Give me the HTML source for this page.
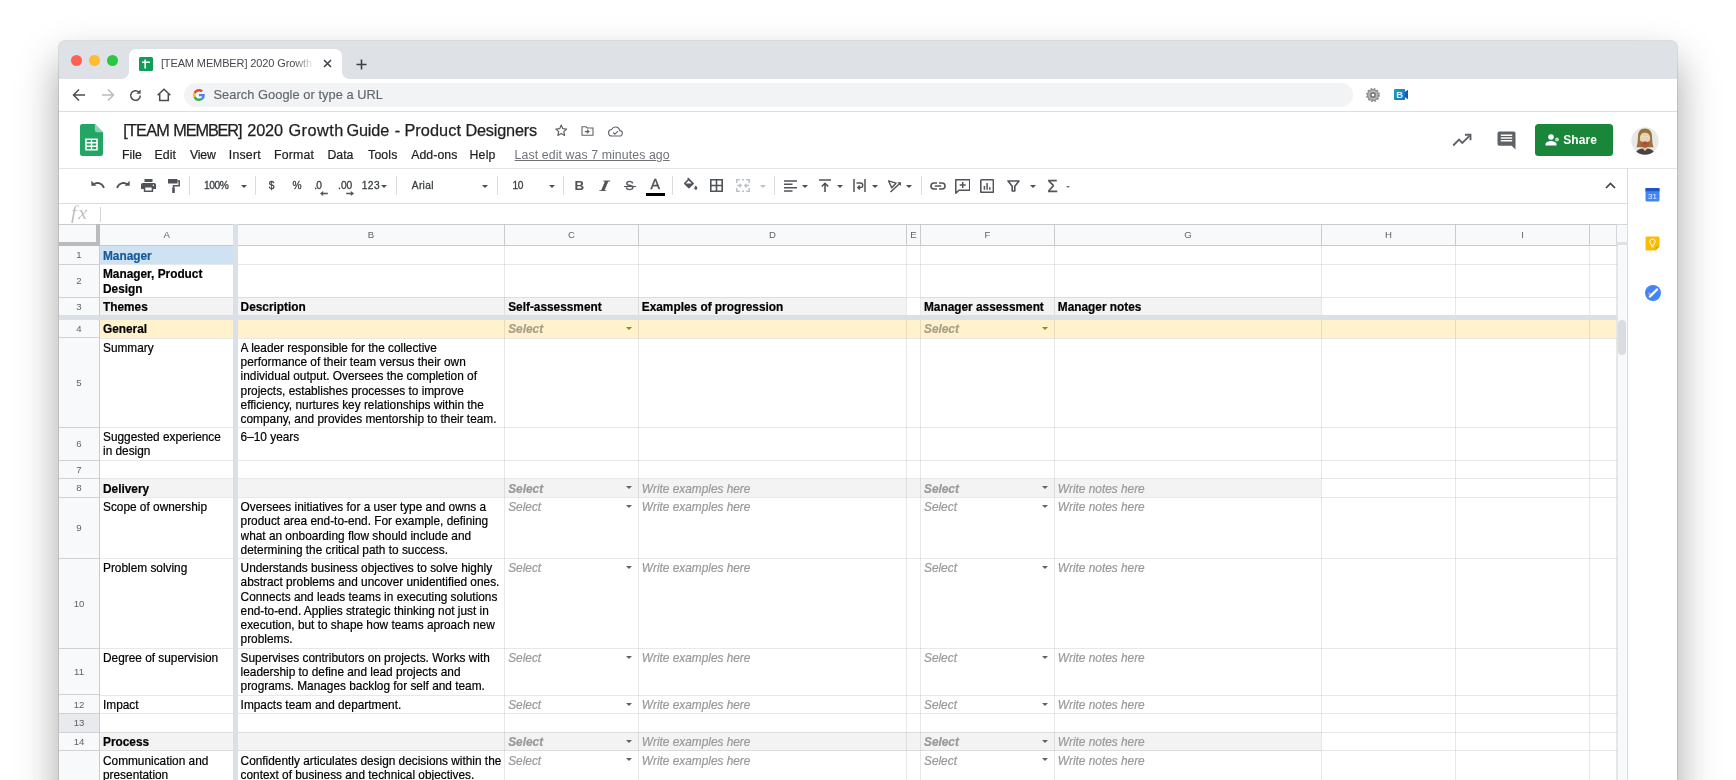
<!DOCTYPE html><html><head><meta charset="utf-8"><title>[TEAM MEMBER] 2020 Growth Guide - Product Designers</title><style>
*{box-sizing:border-box;margin:0;padding:0}
html,body{width:1736px;height:780px;overflow:hidden;background:#fff}
#aa{position:absolute;left:0;top:0;width:1736px;height:780px;will-change:transform}
body{font-family:"Liberation Sans",Arial,sans-serif;position:relative;color:#000}
#win{position:absolute;left:59px;top:41px;width:1617.5px;height:800px;background:#fff;border-radius:5px 5px 0 0;box-shadow:0 0 0 0.5px rgba(0,0,0,.2),0 20px 40px rgba(0,0,0,.36);overflow:hidden}
.abs{position:absolute}
#tabbar{position:absolute;left:0;top:0;width:100%;height:38px;background:#dee1e6}
.tl{position:absolute;top:14.2px;width:11px;height:11px;border-radius:50%}
#tab{position:absolute;left:69.5px;top:8px;width:213px;height:30px;background:#fff;border-radius:7px 7px 0 0}
#tab:before,#tab:after{content:"";position:absolute;bottom:0;width:7px;height:7px;background:radial-gradient(circle at 0 0,rgba(255,255,255,0) 6.5px,#fff 7px)}
#tab:before{left:-7px}
#tab:after{right:-7px;transform:scaleX(-1)}
#tabtitle{position:absolute;left:32.4px;top:6.9px;width:155px;letter-spacing:-.12px;font-size:11px;line-height:14px;color:#45494d;white-space:nowrap;overflow:hidden;-webkit-mask-image:linear-gradient(90deg,#000 86%,transparent 99%);mask-image:linear-gradient(90deg,#000 86%,transparent 99%)}
#addr{position:absolute;left:0;top:38px;width:100%;height:33px;background:#fff;border-bottom:1px solid #dcdee1}
#omni{position:absolute;left:125px;top:3.5px;width:1168.5px;height:24px;border-radius:12px;background:#f1f3f4}
#omni span{position:absolute;left:29.5px;top:4.5px;font-size:12.8px;line-height:15px;color:#63676b;white-space:nowrap;letter-spacing:.06px;-webkit-text-stroke:.15px #63676b}
#hdr{position:absolute;left:0;top:71px;width:100%;height:57px;background:#fff}
#title{position:absolute;left:64px;top:7.9px;font-size:16.3px;line-height:20px;color:#1f1f1f;white-space:nowrap;-webkit-text-stroke:.25px #1f1f1f}
#title span{position:absolute;top:0}
.mi{position:absolute;top:107px;font-size:12.3px;line-height:15px;color:#202124;white-space:nowrap;-webkit-text-stroke:.2px #202124}
#lastedit{position:absolute;top:107px;font-size:12.3px;line-height:15px;color:#6f7378;text-decoration:underline;white-space:nowrap}
#share{position:absolute;left:1475.5px;top:83px;width:78px;height:32px;border-radius:3.5px;background:#198639}
#share span{position:absolute;left:28.7px;top:8.7px;font-size:12px;font-weight:bold;color:#fff;line-height:15px;letter-spacing:.1px}
#tbar{position:absolute;left:0;top:127px;width:1568px;height:36px;border-top:1px solid #e4e5e7;border-bottom:1px solid #dadce0;background:#fff}
.tt{position:absolute;font-size:10.2px;line-height:13px;color:#3c4043;white-space:nowrap;-webkit-text-stroke:.3px #3c4043}
.sep{position:absolute;top:7.4px;width:1px;height:18.3px;background:#dadce0}
.car{position:absolute;width:0;height:0;border-left:3.4px solid transparent;border-right:3.4px solid transparent;border-top:3.6px solid #444}
#fbar{position:absolute;left:0;top:163px;width:1568px;height:21px;background:#fff}
#side{position:absolute;left:1568px;top:127px;width:50px;height:700px;background:#fff;border-left:1px solid #dadce0;border-top:1px solid #e4e5e7}
#grid{position:absolute;left:0;top:183px;width:1568px;height:600px;background:#fff;overflow:hidden}
.c{position:absolute;font-size:11.85px;line-height:14.2px;color:#000;white-space:nowrap;overflow:hidden;-webkit-text-stroke:.2px}
.b{font-weight:bold}
.i{font-style:italic;color:#999}
.rh{position:absolute;left:0;width:40px;font-size:9.6px;color:#5f6368;text-align:center;background:#f8f9fa}
.ch{position:absolute;top:0;height:21px;font-size:9.6px;color:#5f6368;text-align:center;background:#f8f9fa;line-height:20px}
.hl{position:absolute;left:0;height:1px;background:rgba(0,0,10,.09)}
.vl{position:absolute;top:0;width:1px;background:rgba(0,0,10,.09)}
</style></head><body>
<div id="aa"><div id="win">
<div id="tabbar">
<div class="tl" style="left:11.8px;background:#ff5f57"></div>
<div class="tl" style="left:29.7px;background:#febc2e"></div>
<div class="tl" style="left:47.5px;background:#28c840"></div>
<div id="tab">
<svg class="abs" style="left:10.200px;top:7.600px" width="14" height="14" viewBox="0 0 14 14"><rect width="14" height="14" rx="1.5" fill="#0f9d58"/><path d="M3 5.2h8M6.2 2.6v9" stroke="#fff" stroke-width="1.6" fill="none"/></svg>
<div id="tabtitle">[TEAM MEMBER] 2020 Growth Guide - Product Designers</div>
<svg class="abs" style="left:194.300px;top:9.700px" width="9" height="9" viewBox="0 0 9 9"><path d="M1 1l7 7M8 1l-7 7" stroke="#3c4043" stroke-width="1.5" fill="none"/></svg>
</div>
<svg class="abs" style="left:296.5px;top:17.5px" width="11" height="11" viewBox="0 0 11 11"><path d="M5.5 0.5v10M0.5 5.5h10" stroke="#3c4043" stroke-width="1.6" fill="none"/></svg>
</div>
<div id="addr">
<svg class="abs" style="left:13px;top:9px" width="14" height="14" viewBox="0 0 14 14"><path d="M13 7H2M7 1.5L1.5 7 7 12.5" stroke="#4a4d51" stroke-width="1.5" fill="none"/></svg>
<svg class="abs" style="left:41.5px;top:9px" width="14" height="14" viewBox="0 0 14 14"><path d="M1 7h11M7 1.5L12.5 7 7 12.5" stroke="#b9bcc0" stroke-width="1.5" fill="none"/></svg>
<svg class="abs" style="left:68.5px;top:8.5px" width="15" height="15" viewBox="0 0 15 15"><path d="M12.3 7.5a4.8 4.8 0 1 1-1.5-3.5" stroke="#4a4d51" stroke-width="1.5" fill="none"/><path d="M12.6 1.6v4.2H8.4z" fill="#4a4d51"/></svg>
<svg class="abs" style="left:96.5px;top:8px" width="16" height="16" viewBox="0 0 16 16"><path d="M1.6 8.2L8 2.2l6.4 6M3.7 6.8v6.7h8.6V6.8" stroke="#4a4d51" stroke-width="1.5" fill="none" stroke-linejoin="miter"/></svg>
<div id="omni">
<svg class="abs" style="left:9px;top:6px" width="12" height="12" viewBox="0 0 48 48"><path fill="#EA4335" d="M24 9.5c3.54 0 6.71 1.22 9.21 3.6l6.85-6.85C35.9 2.38 30.47 0 24 0 14.62 0 6.51 5.38 2.56 13.22l7.98 6.19C12.43 13.72 17.74 9.5 24 9.5z"/><path fill="#4285F4" d="M46.98 24.55c0-1.57-.15-3.09-.38-4.55H24v9.02h12.94c-.58 2.96-2.26 5.48-4.78 7.18l7.73 6c4.51-4.18 7.09-10.36 7.09-17.65z"/><path fill="#FBBC05" d="M10.53 28.59c-.48-1.45-.76-2.99-.76-4.59s.27-3.14.76-4.59l-7.98-6.19C.92 16.46 0 20.12 0 24c0 3.88.92 7.54 2.56 10.78l7.97-6.19z"/><path fill="#34A853" d="M24 48c6.48 0 11.93-2.13 15.89-5.81l-7.73-6c-2.15 1.45-4.92 2.3-8.16 2.3-6.26 0-11.57-4.22-13.47-9.91l-7.98 6.19C6.51 42.62 14.62 48 24 48z"/></svg>
<span>Search Google or type a URL</span></div>
<svg class="abs" style="left:1306.900px;top:8.800px" width="14" height="14" viewBox="0 0 14 14"><circle cx="7" cy="7" r="6" fill="#8c8c8c" stroke="#8c8c8c" stroke-width="2" stroke-dasharray="1.600 1.540"/><circle cx="7" cy="7" r="5.600" fill="#929292"/><circle cx="7" cy="7" r="4" fill="none" stroke="#b9b9b9" stroke-width="1.600"/><circle cx="7" cy="7" r="2.600" fill="#777"/><circle cx="7" cy="7" r="1.300" fill="#fff"/></svg>
<svg class="abs" style="left:1334.900px;top:10px" width="14.400" height="11" viewBox="0 0 14.400 11"><defs><linearGradient id="bg1" x1="0" y1="0" x2="1" y2="1"><stop offset="0" stop-color="#1ba3b5"/><stop offset="1" stop-color="#1a6fc8"/></linearGradient></defs><rect x="0" y="0" width="11" height="11" rx=".8" fill="url(#bg1)"/><path d="M10.800 3L14.400 .6v9.800L10.800 8z" fill="#1559c4"/><text x="2.300" y="9.200" font-family="Liberation Sans,sans-serif" font-size="9.500" font-weight="bold" fill="#d9f1fb">B</text></svg>
</div>
<div id="hdr">
<svg class="abs" style="left:21px;top:12px" width="23" height="32" viewBox="0 0 23 32"><path d="M2.2 0h12.6L23 8.2v21.6a2.2 2.2 0 0 1-2.2 2.2H2.2A2.2 2.2 0 0 1 0 29.800V2.2A2.200 2.200 0 0 1 2.200 0z" fill="#23a566"/><path d="M14.800 0L23 8.200h-6a2.200 2.200 0 0 1-2.200-2.200z" fill="#8ed1b1"/><path d="M5.200 14.500h12.600v12H5.200zM6.800 16.100v2h4v-2zm5.400 0v2h4v-2zM6.800 19.500v2h4v-2zm5.400 0v2h4v-2zM6.800 22.900v2h4v-2zm5.400 0v2h4v-2z" fill="#fff" fill-rule="evenodd"/></svg>
<div id="title">
<span style="left:0.2px;letter-spacing:-0.77px">[TEAM</span>
<span style="left:50.3px;letter-spacing:-1.13px">MEMBER]</span>
<span style="left:124.3px;letter-spacing:-0.19px">2020</span>
<span style="left:165.4px;letter-spacing:0.48px">Growth</span>
<span style="left:223.4px;letter-spacing:-0.12px">Guide</span>
<span style="left:271.7px;letter-spacing:0.00px">-</span>
<span style="left:281.4px;letter-spacing:0.07px">Product</span>
<span style="left:342.4px;letter-spacing:-0.19px">Designers</span>
</div>
</div>
<div class="mi" style="left:63.0px;letter-spacing:0.04px">File</div>
<div class="mi" style="left:95.4px;letter-spacing:0.11px">Edit</div>
<div class="mi" style="left:130.9px;letter-spacing:-0.12px">View</div>
<div class="mi" style="left:169.8px;letter-spacing:0.21px">Insert</div>
<div class="mi" style="left:215.0px;letter-spacing:0.21px">Format</div>
<div class="mi" style="left:268.5px;letter-spacing:-0.01px">Data</div>
<div class="mi" style="left:309.1px;letter-spacing:0.14px">Tools</div>
<div class="mi" style="left:352.2px;letter-spacing:0.06px">Add-ons</div>
<div class="mi" style="left:410.5px;letter-spacing:0.22px">Help</div>
<div id="lastedit" style="left:455.6px;letter-spacing:0.10px">Last edit was 7 minutes ago</div>
<svg class="abs" style="left:495.300px;top:82.200px" width="14.500" height="14.500" viewBox="0 0 24 24"><path d="M12 3.5l2.600 5.900 6.400.600-4.800 4.300 1.400 6.300L12 17.300l-5.600 3.300 1.400-6.300L3 10l6.400-.600z" stroke="#5f6368" stroke-width="2" fill="none" stroke-linejoin="round"/></svg>
<svg class="abs" style="left:522.300px;top:83.800px" width="13" height="11" viewBox="0 0 26 22"><path d="M2 3.500h8l2.500 2.500H24v14.500H2z" stroke="#5f6368" stroke-width="2.200" fill="none"/><path d="M12 9.500l4 3.700-4 3.700M7.500 13.200H16" stroke="#5f6368" stroke-width="2.200" fill="none"/></svg>
<svg class="abs" style="left:548.5px;top:84.5px" width="15" height="11" viewBox="0 0 30 22"><path d="M23.500 9.200A8.500 8.500 0 0 0 7.300 7 6.500 6.500 0 0 0 8 20h15a5.400 5.400 0 0 0 .5-10.800z" stroke="#5f6368" stroke-width="2.200" fill="none"/><path d="M10.500 13l3.300 3.300 6-6" stroke="#5f6368" stroke-width="2.200" fill="none"/></svg>
<svg class="abs" style="left:1392.5px;top:91.5px" width="20" height="14" viewBox="0 0 20 14"><path d="M1.200 12.500L7 6.700l3.300 3.300L17.500 2.800" stroke="#5f6368" stroke-width="1.900" fill="none"/><path d="M13 1.800h5.500v5.500" stroke="#5f6368" stroke-width="1.900" fill="none"/></svg>
<svg class="abs" style="left:1438px;top:90px" width="19" height="19" viewBox="0 0 19 19"><path d="M2.200 0.500h14.600a1.700 1.700 0 0 1 1.700 1.700V18.500l-3.800-3.800H2.200A1.700 1.700 0 0 1 .5 13V2.200A1.700 1.700 0 0 1 2.200 .5z" fill="#5f6368"/><path d="M3.800 4.200h11.400M3.800 7h11.400M3.800 9.800h11.400" stroke="#fff" stroke-width="1.500"/></svg>
<div id="share"><svg class="abs" style="left:10.500px;top:9.500px" width="15" height="12" viewBox="0 0 15 12"><circle cx="6" cy="3" r="2.800" fill="#fff"/><path d="M0.500 11.500v-1.500c0-2 3.600-3 5.500-3s5.500 1 5.500 3v1.500z" fill="#fff"/><circle cx="12" cy="5.500" r="2" fill="#b7dfc3"/></svg><span>Share</span></div>
<svg class="abs" style="left:1571.800px;top:85.500px" width="28" height="28" viewBox="0 0 28 28"><defs><clipPath id="av"><circle cx="14" cy="14" r="13.700"/></clipPath></defs><g clip-path="url(#av)"><rect width="28" height="28" fill="#e9e8e6"/><path d="M14 1.500c-4.600 0-6.800 3.200-7 7.600-.2 4.400-.3 8-1.500 11.200h17c-1.200-3.200-1.300-6.800-1.500-11.200-.2-4.400-2.400-7.600-7-7.600z" fill="#9a733c"/><rect x="12" y="17" width="4" height="6" fill="#e3bf96"/><path d="M4 28c.5-4.500 4-6.800 10-6.800s9.500 2.300 10 6.800z" fill="#4a4343"/><path d="M11.200 21h5.600L14 24z" fill="#e8c9a2"/><ellipse cx="14" cy="11.600" rx="5.200" ry="6.800" fill="#ecd0ab"/><path d="M9.300 13.500c.2 4.300 2 7.300 4.700 7.300s4.500-3 4.700-7.300c-.8 1.200-2 1.600-3 1.300-.9-.5-2.500-.5-3.400 0-1 .3-2.200-.1-3-1.300z" fill="#ab5a3e"/><path d="M12.600 16.300h2.800" stroke="#7d3f2b" stroke-width=".7"/><path d="M8.800 8C9.500 4.200 11.800 3.600 14 3.600s4.500.6 5.200 4.400c-1.500-1.700-3-2.200-5.200-2.200S10.300 6.300 8.800 8z" fill="#9a733c"/><circle cx="11.900" cy="10.800" r="1.350" fill="#fff"/><circle cx="16.100" cy="10.800" r="1.350" fill="#fff"/><circle cx="11.900" cy="10.900" r=".65" fill="#5b7f95"/><circle cx="16.100" cy="10.900" r=".65" fill="#5b7f95"/></g></svg>
<div id="tbar">
<div class="sep" style="left:129.9px"></div>
<div class="sep" style="left:195.9px"></div>
<div class="sep" style="left:336.9px"></div>
<div class="sep" style="left:437.8px"></div>
<div class="sep" style="left:503.8px"></div>
<div class="sep" style="left:612.5px"></div>
<div class="sep" style="left:714.5px"></div>
<div class="sep" style="left:861.5px"></div>
<div class="tt" style="left:145.0px;top:9.6px;letter-spacing:-0.43px;">100%</div>
<div class="car" style="left:181.6px;top:15.8px;border-top-color:#4a4d51"></div>
<div class="tt" style="left:209.8px;top:9.6px;letter-spacing:0.00px;">$</div>
<div class="tt" style="left:233.5px;top:9.6px;letter-spacing:0.00px;">%</div>
<div class="tt" style="left:255.2px;top:9.6px;letter-spacing:-0.83px;">.0</div>
<div class="tt" style="left:279.1px;top:9.6px;letter-spacing:0.00px;">.00</div>
<div class="tt" style="left:302.7px;top:9.6px;letter-spacing:0.48px;">123</div>
<div class="car" style="left:321.8px;top:15.8px;border-top-color:#4a4d51"></div>
<div class="tt" style="left:352.8px;top:9.6px;letter-spacing:0.32px;">Arial</div>
<div class="car" style="left:422.9px;top:15.8px;border-top-color:#4a4d51"></div>
<div class="tt" style="left:453.4px;top:9.6px;letter-spacing:-0.37px;">10</div>
<div class="car" style="left:489.7px;top:15.8px;border-top-color:#4a4d51"></div>
<svg class="abs" style="left:32.0px;top:10.9px" width="14" height="10" viewBox="0 0 14 10"><path d="M.3 .8v5h5z" fill="#505357"/><path d="M2.600 4.500C5.500 2 10.500 2.400 13 7.800" stroke="#505357" stroke-width="1.900" fill="none"/></svg>
<svg class="abs" style="left:57.0px;top:10.9px" width="14" height="10" viewBox="0 0 14 10"><path d="M13.700 .8v5h-5z" fill="#505357"/><path d="M11.400 4.500C8.500 2 3.500 2.400 1 7.800" stroke="#505357" stroke-width="1.900" fill="none"/></svg>
<svg class="abs" style="left:82.0px;top:9.9px" width="15" height="13" viewBox="0 0 15 13"><path d="M3.500 0h8v3h-8z" fill="#505357"/><path d="M1.800 4h11.400A1.800 1.800 0 0 1 15 5.800V10h-2.800v3H2.800v-3H0V5.800A1.800 1.800 0 0 1 1.800 4z" fill="#505357"/><rect x="4.300" y="8.500" width="6.400" height="3" fill="#fff"/><circle cx="12.400" cy="6.200" r=".8" fill="#fff"/></svg>
<svg class="abs" style="left:108.5px;top:9.9px" width="12" height="14" viewBox="0 0 12 14"><path d="M0 0h9.500v4.500H0z" fill="#505357"/><path d="M9.500 2h1.700v4.800H5.500v2" stroke="#505357" stroke-width="1.500" fill="none"/><rect x="4.200" y="8.500" width="2.600" height="5.500" fill="#505357"/></svg>
<svg class="abs" style="left:261.0px;top:21.500px" width="8" height="5" viewBox="0 0 8 5"><path d="M7.800 2.500H1.500" stroke="#505357" stroke-width="1.300" fill="none"/><path d="M3.200 0L0 2.500 3.200 5z" fill="#505357"/></svg>
<svg class="abs" style="left:286.5px;top:21.500px" width="8" height="5" viewBox="0 0 8 5"><path d="M.2 2.500h6.300" stroke="#505357" stroke-width="1.300" fill="none"/><path d="M4.800 0L8 2.500 4.800 5z" fill="#505357"/></svg>
<div class="tt" style="left:515.6px;top:7.9px;font-size:13.4px;line-height:17px;font-weight:bold;color:#505357;-webkit-text-stroke:0">B</div>
<div class="tt" style="left:539.6px;top:8.4px;font-size:15.5px;line-height:17px;font-style:italic;font-weight:bold;font-family:'Liberation Serif',serif;color:#505357;-webkit-text-stroke:.2px #505357;transform:scaleX(1.35) skewX(-8deg);transform-origin:0 100%">I</div>
<div class="tt" style="left:566.2px;top:8.3px;font-size:13px;line-height:17px;color:#505357;-webkit-text-stroke:.3px #505357">S</div>
<div class="abs" style="left:564.5px;top:16.600px;width:12.200px;height:1.400px;background:#505357"></div>
<div class="tt" style="left:591.6px;top:7.3px;font-size:14.2px;line-height:17px;color:#505357;-webkit-text-stroke:.4px #505357">A</div>
<div class="abs" style="left:587.4px;top:24px;width:18.400px;height:3.400px;background:#000"></div>
<svg class="abs" style="left:624.0px;top:8.2px" width="15" height="14" viewBox="0 0 15 14"><path d="M5.500 .8l5.700 5.700-4.600 4.600a1 1 0 0 1-1.400 0L1.300 7.200a1 1 0 0 1 0-1.400L5 2.100 3.900 1z" fill="#505357"/><path d="M2.600 6.500h6.200L5.700 3.400z" fill="#fff"/><path d="M12.800 8.500s1.500 1.700 1.500 2.700a1.500 1.500 0 0 1-3 0c0-1 1.500-2.700 1.500-2.700z" fill="#505357"/></svg>
<svg class="abs" style="left:650.5px;top:10.4px" width="13" height="13" viewBox="0 0 13 13"><path d="M.8 .8h11.400v11.400H.8zM6.500 .8v11.400M.8 6.500h11.400" stroke="#505357" stroke-width="1.600" fill="none"/></svg>
<svg class="abs" style="left:677.0px;top:10.4px" width="14" height="13" viewBox="0 0 14 13"><path d="M.8 4V.8h3M6 .8h2M10.200 .8h3V4M.8 9v3.200h3M6 12.200h2M10.200 12.200h3V9" stroke="#bdc1c6" stroke-width="1.500" fill="none"/><path d="M1 6.500h4M3.500 4.800l1.700 1.700-1.700 1.700M13 6.500H9M10.500 4.800L8.800 6.500l1.700 1.700" stroke="#bdc1c6" stroke-width="1.300" fill="none"/></svg>
<div class="car" style="left:700.6px;top:15.8px;border-top-color:#bdc1c6"></div>
<svg class="abs" style="left:724.5px;top:10.9px" width="13" height="12" viewBox="0 0 13 12"><path d="M0 1h13M0 4.300h8.500M0 7.700h13M0 11h8.500" stroke="#505357" stroke-width="1.500"/></svg>
<div class="car" style="left:743.1px;top:15.8px;border-top-color:#4a4d51"></div>
<svg class="abs" style="left:759.5px;top:10.4px" width="12" height="13" viewBox="0 0 12 13"><path d="M0 1h12" stroke="#505357" stroke-width="1.600"/><path d="M6 13V4.500M2.800 7.500L6 4.300l3.200 3.200" stroke="#505357" stroke-width="1.600" fill="none"/></svg>
<div class="car" style="left:778.1px;top:15.8px;border-top-color:#4a4d51"></div>
<svg class="abs" style="left:793.5px;top:10.4px" width="13" height="13" viewBox="0 0 13 13"><path d="M1 0v13M12 0v13" stroke="#505357" stroke-width="1.500"/><path d="M3.500 4h4a2 2 0 0 1 0 4.500H5M6.800 6.500L4.800 8.500l2 2" stroke="#505357" stroke-width="1.400" fill="none"/></svg>
<div class="car" style="left:812.6px;top:15.8px;border-top-color:#4a4d51"></div>
<svg class="abs" style="left:828.0px;top:9.9px" width="15" height="14" viewBox="0 0 15 14"><path d="M1.500 1.800l7.500 2.400-4.300 4.600z" stroke="#505357" stroke-width="1.400" fill="none" stroke-linejoin="round"/><path d="M3.500 13L13 4.200" stroke="#505357" stroke-width="1.500" fill="none"/><path d="M10.200 3.200h3.800v3.800z" fill="#505357"/></svg>
<div class="car" style="left:847.1px;top:15.8px;border-top-color:#4a4d51"></div>
<svg class="abs" style="left:870.5px;top:12.9px" width="16" height="8" viewBox="0 0 16 8"><path d="M7 1H4a3 3 0 0 0 0 6h3M9 1h3a3 3 0 0 1 0 6H9M4.800 4h6.400" stroke="#505357" stroke-width="1.600" fill="none"/></svg>
<svg class="abs" style="left:895.8px;top:9.7px" width="15.5" height="15" viewBox="0 0 15.500 15"><path d="M.8 .8h13.900v10.400H4L.8 14.200z" stroke="#505357" stroke-width="1.500" fill="none" stroke-linejoin="round"/><path d="M7.700 3v6M4.700 6h6" stroke="#505357" stroke-width="1.500"/></svg>
<svg class="abs" style="left:921.2px;top:10.3px" width="14.2" height="14.2" viewBox="0 0 14.200 14.200"><rect x=".8" y=".8" width="12.600" height="12.600" rx=".8" stroke="#505357" stroke-width="1.600" fill="none"/><path d="M4.400 10.800V7M7.100 10.800V4M9.800 10.800V8.300" stroke="#505357" stroke-width="1.500"/></svg>
<svg class="abs" style="left:948.0px;top:11.1px" width="13" height="12" viewBox="0 0 13 12"><path d="M1 1h11L7.800 6.300v4.700H5.200V6.300z" stroke="#505357" stroke-width="1.600" fill="none" stroke-linejoin="round"/></svg>
<div class="car" style="left:970.6px;top:15.8px;border-top-color:#4a4d51"></div>
<div class="tt" style="left:988.3px;top:8px;font-size:17px;line-height:20px;color:#505357;-webkit-text-stroke:.3px #505357">Σ</div>
<div class="car" style="left:1006.5px;top:17px;border-top-color:#777;border-left-width:2.500px;border-right-width:2.500px;border-top-width:2.800px"></div>
<svg class="abs" style="left:1545.5px;top:12.9px" width="11" height="7" viewBox="0 0 11 7"><path d="M1 6l4.500-4.500L10 6" stroke="#444" stroke-width="1.700" fill="none"/></svg>
</div>
<div id="fbar"><div class="abs" style="left:11.500px;top:-1.500px;font-family:'Liberation Serif',serif;font-style:italic;font-size:18px;line-height:20px;color:#bcbec1;letter-spacing:1.500px;transform:scaleX(1.12);transform-origin:0 0">fx</div><div class="abs" style="left:40.500px;top:3px;width:1px;height:15px;background:#d5d7da"></div></div>
<div id="side">
<svg class="abs" style="left:16.5px;top:17.5px" width="15" height="15" viewBox="0 0 15 15"><rect x=".5" y="1" width="14" height="13.500" rx="1.500" fill="#4285f4"/><rect x=".5" y="1" width="14" height="3.200" fill="#1a56c4"/><text x="7.500" y="12.300" text-anchor="middle" font-family="Liberation Sans,sans-serif" font-size="8" fill="#e8f0fe">31</text></svg>
<svg class="abs" style="left:16.5px;top:67.0px" width="15" height="15" viewBox="0 0 15 15"><path d="M1.500 .5h12a1 1 0 0 1 1 1v9l-4 4h-9a1 1 0 0 1-1-1v-12a1 1 0 0 1 1-1z" fill="#fbbc04"/><path d="M14.500 10.500l-4 4v-3a1 1 0 0 1 1-1z" fill="#e8a200"/><path d="M7.500 3a2.700 2.700 0 0 0-1.400 5v1.200h2.800V8a2.700 2.700 0 0 0-1.400-5z" fill="none" stroke="#fff" stroke-width="1"/><path d="M6.300 10.800h2.400" stroke="#fff" stroke-width="1"/></svg>
<svg class="abs" style="left:16.8px;top:116.0px" width="16" height="16" viewBox="0 0 16 16"><circle cx="8" cy="8" r="8" fill="#4285f4"/><path d="M5 11.500l7-7" stroke="#fff" stroke-width="2.400" stroke-linecap="round"/><circle cx="4.600" cy="8.800" r="1.300" fill="#f9ab00"/></svg>
</div>
<div id="grid">
<div class="abs" style="left:41.0px;top:21.9px;width:133.4px;height:18.6px;background:#cfe2f3"></div>
<div class="abs" style="left:41.0px;top:73.3px;width:806.0px;height:18.2px;background:#f3f3f3"></div>
<div class="abs" style="left:862.0px;top:73.3px;width:400.0px;height:18.2px;background:#f3f3f3"></div>
<div class="abs" style="left:41.0px;top:95.6px;width:1516.0px;height:18.6px;background:#fff2cc"></div>
<div class="abs" style="left:41.0px;top:254.7px;width:1221.0px;height:18.6px;background:#f3f3f3"></div>
<div class="abs" style="left:41.0px;top:508.2px;width:1221.0px;height:18.5px;background:#f3f3f3"></div>
<div class="hl" style="top:40.0px;width:1557.5px"></div>
<div class="hl" style="top:72.8px;width:1557.5px"></div>
<div class="hl" style="top:113.7px;width:1557.5px"></div>
<div class="hl" style="top:202.9px;width:1557.5px"></div>
<div class="hl" style="top:235.7px;width:1557.5px"></div>
<div class="hl" style="top:254.2px;width:1557.5px"></div>
<div class="hl" style="top:272.8px;width:1557.5px"></div>
<div class="hl" style="top:333.9px;width:1557.5px"></div>
<div class="hl" style="top:423.7px;width:1557.5px"></div>
<div class="hl" style="top:470.5px;width:1557.5px"></div>
<div class="hl" style="top:488.9px;width:1557.5px"></div>
<div class="hl" style="top:507.7px;width:1557.5px"></div>
<div class="hl" style="top:526.2px;width:1557.5px"></div>
<div class="vl" style="left:445.2px;height:600px"></div>
<div class="vl" style="left:578.8px;height:600px"></div>
<div class="vl" style="left:847.0px;height:600px"></div>
<div class="vl" style="left:861.0px;height:600px"></div>
<div class="vl" style="left:994.8px;height:600px"></div>
<div class="vl" style="left:1262.0px;height:600px"></div>
<div class="vl" style="left:1396.0px;height:600px"></div>
<div class="vl" style="left:1530.0px;height:600px"></div>
<div class="vl" style="left:1557.0px;height:600px"></div>
<div class="abs" style="left:0;top:0;width:40.5px;height:600px;background:#f8f9fa;border-right:1px solid #c9cbce"></div>
<div class="rh" style="top:22.4px;height:18.6px;line-height:18.1px;border-bottom:1px solid #d0d2d5">1</div>
<div class="rh" style="top:41.0px;height:32.8px;line-height:32.3px;border-bottom:1px solid #d0d2d5">2</div>
<div class="rh" style="top:73.8px;height:18.1px;line-height:17.6px;border-bottom:1px solid #d0d2d5">3</div>
<div class="rh" style="top:95.6px;height:18.6px;line-height:18.1px;border-bottom:1px solid #d0d2d5">4</div>
<div class="rh" style="top:114.7px;height:89.2px;line-height:88.7px;border-bottom:1px solid #d0d2d5">5</div>
<div class="rh" style="top:203.9px;height:32.8px;line-height:32.3px;border-bottom:1px solid #d0d2d5">6</div>
<div class="rh" style="top:236.7px;height:18.5px;line-height:18.0px;border-bottom:1px solid #d0d2d5">7</div>
<div class="rh" style="top:255.2px;height:18.6px;line-height:18.1px;border-bottom:1px solid #d0d2d5">8</div>
<div class="rh" style="top:273.8px;height:61.1px;line-height:60.6px;border-bottom:1px solid #d0d2d5">9</div>
<div class="rh" style="top:334.9px;height:89.8px;line-height:89.3px;border-bottom:1px solid #d0d2d5">10</div>
<div class="rh" style="top:424.7px;height:46.8px;line-height:46.3px;border-bottom:1px solid #d0d2d5">11</div>
<div class="rh" style="top:471.5px;height:18.4px;line-height:17.9px;border-bottom:1px solid #d0d2d5">12</div>
<div class="rh" style="top:489.9px;height:18.8px;line-height:18.3px;background:#e8eaed;border-bottom:1px solid #d0d2d5">13</div>
<div class="rh" style="top:508.7px;height:18.5px;line-height:18.0px;border-bottom:1px solid #d0d2d5">14</div>
<div class="abs" style="left:0;top:0;width:1557.5px;height:21.8px;background:#f8f9fa;border-top:1px solid #c9cbce;border-bottom:1px solid #c9cbce"></div>
<div class="ch" style="left:41.0px;width:133.4px;height:20.4px;top:1px;border-right:1px solid #c9cbce;box-sizing:content-box">A</div>
<div class="ch" style="left:178.6px;width:266.6px;height:20.4px;top:1px;border-right:1px solid #c9cbce;box-sizing:content-box">B</div>
<div class="ch" style="left:446.2px;width:132.6px;height:20.4px;top:1px;border-right:1px solid #c9cbce;box-sizing:content-box">C</div>
<div class="ch" style="left:579.8px;width:267.2px;height:20.4px;top:1px;border-right:1px solid #c9cbce;box-sizing:content-box">D</div>
<div class="ch" style="left:848.0px;width:13.0px;height:20.4px;top:1px;border-right:1px solid #c9cbce;box-sizing:content-box">E</div>
<div class="ch" style="left:862.0px;width:132.8px;height:20.4px;top:1px;border-right:1px solid #c9cbce;box-sizing:content-box">F</div>
<div class="ch" style="left:995.8px;width:266.2px;height:20.4px;top:1px;border-right:1px solid #c9cbce;box-sizing:content-box">G</div>
<div class="ch" style="left:1263.0px;width:133.0px;height:20.4px;top:1px;border-right:1px solid #c9cbce;box-sizing:content-box">H</div>
<div class="ch" style="left:1397.0px;width:133.0px;height:20.4px;top:1px;border-right:1px solid #c9cbce;box-sizing:content-box">I</div>
<div class="ch" style="left:1531.0px;width:26.0px;height:20.4px;top:1px;border-right:1px solid #c9cbce;box-sizing:content-box"></div>
<div class="abs" style="left:0;top:0;width:37px;height:18.4px;background:#f8f9fa;border-top:1px solid #c9cbce"></div>
<div class="abs" style="left:37px;top:0;width:3.8px;height:21.8px;background:#b9bbbe"></div>
<div class="abs" style="left:0;top:18.4px;width:40.8px;height:3.4px;background:#b9bbbe"></div>
<div class="abs" style="left:174.4px;top:0;width:4.2px;height:600px;background:#dbdfe6"></div>
<div class="abs" style="left:0;top:91.4px;width:1557.5px;height:4.2px;background:#dbdfe6"></div>
<div class="c b" style="left:44.0px;top:24.7px;width:129.4px;color:#15599a">Manager</div>
<div class="c b" style="left:44.0px;top:43.3px;width:129.4px;">Manager, Product<br>Design</div>
<div class="c b" style="left:44.0px;top:76.1px;width:129.4px;">Themes</div>
<div class="c b" style="left:181.6px;top:76.1px;width:262.6px;">Description</div>
<div class="c b" style="left:449.2px;top:76.1px;width:128.6px;">Self-assessment</div>
<div class="c b" style="left:582.8px;top:76.1px;width:263.2px;">Examples of progression</div>
<div class="c b" style="left:865.0px;top:76.1px;width:128.8px;">Manager assessment</div>
<div class="c b" style="left:998.8px;top:76.1px;width:262.2px;">Manager notes</div>
<div class="c b" style="left:44.0px;top:98.4px;width:129.4px;">General</div>
<div class="c b i" style="left:449.2px;top:98.4px;width:128.6px;color:#a8a08a">Select</div>
<div class="c b i" style="left:865.0px;top:98.4px;width:128.8px;color:#a8a08a">Select</div>
<div class="car" style="left:566.7px;top:103.2px;border-top-color:#a5820f;border-left-width:3.7px;border-right-width:3.7px;border-top-width:3.9px"></div>
<div class="car" style="left:982.7px;top:103.2px;border-top-color:#a5820f;border-left-width:3.7px;border-right-width:3.7px;border-top-width:3.9px"></div>
<div class="c " style="left:44.0px;top:117.0px;width:129.4px;">Summary</div>
<div class="c " style="left:181.6px;top:117.0px;width:262.6px;">A leader responsible for the collective<br>performance of their team versus their own<br>individual output. Oversees the completion of<br>projects, establishes processes to improve<br>efficiency, nurtures key relationships within the<br>company, and provides mentorship to their team.</div>
<div class="c " style="left:44.0px;top:206.2px;width:129.4px;">Suggested experience<br>in design</div>
<div class="c " style="left:181.6px;top:206.2px;width:262.6px;">6–10 years</div>
<div class="c b" style="left:44.0px;top:257.5px;width:129.4px;">Delivery</div>
<div class="c b i" style="left:449.2px;top:257.5px;width:128.6px;">Select</div>
<div class="car" style="left:566.7px;top:262.3px;border-top-color:#5f6368;border-left-width:3.7px;border-right-width:3.7px;border-top-width:3.9px"></div>
<div class="c i" style="left:582.8px;top:257.5px;width:263.2px;">Write examples here</div>
<div class="c b i" style="left:865.0px;top:257.5px;width:128.8px;">Select</div>
<div class="car" style="left:982.7px;top:262.3px;border-top-color:#5f6368;border-left-width:3.7px;border-right-width:3.7px;border-top-width:3.9px"></div>
<div class="c i" style="left:998.8px;top:257.5px;width:262.2px;">Write notes here</div>
<div class="c " style="left:44.0px;top:276.1px;width:129.4px;">Scope of ownership</div>
<div class="c " style="left:181.6px;top:276.1px;width:262.6px;">Oversees initiatives for a user type and owns a<br>product area end-to-end. For example, defining<br>what an onboarding flow should include and<br>determining the critical path to success.</div>
<div class="c i" style="left:449.2px;top:276.1px;width:128.6px;">Select</div>
<div class="car" style="left:566.7px;top:280.9px;border-top-color:#5f6368;border-left-width:3.7px;border-right-width:3.7px;border-top-width:3.9px"></div>
<div class="c i" style="left:582.8px;top:276.1px;width:263.2px;">Write examples here</div>
<div class="c i" style="left:865.0px;top:276.1px;width:128.8px;">Select</div>
<div class="car" style="left:982.7px;top:280.9px;border-top-color:#5f6368;border-left-width:3.7px;border-right-width:3.7px;border-top-width:3.9px"></div>
<div class="c i" style="left:998.8px;top:276.1px;width:262.2px;">Write notes here</div>
<div class="c " style="left:44.0px;top:337.2px;width:129.4px;">Problem solving</div>
<div class="c " style="left:181.6px;top:337.2px;width:262.6px;">Understands business objectives to solve highly<br>abstract problems and uncover unidentified ones.<br>Connects and leads teams in executing solutions<br>end-to-end. Applies strategic thinking not just in<br>execution, but to shape how teams aproach new<br>problems.</div>
<div class="c i" style="left:449.2px;top:337.2px;width:128.6px;">Select</div>
<div class="car" style="left:566.7px;top:342.0px;border-top-color:#5f6368;border-left-width:3.7px;border-right-width:3.7px;border-top-width:3.9px"></div>
<div class="c i" style="left:582.8px;top:337.2px;width:263.2px;">Write examples here</div>
<div class="c i" style="left:865.0px;top:337.2px;width:128.8px;">Select</div>
<div class="car" style="left:982.7px;top:342.0px;border-top-color:#5f6368;border-left-width:3.7px;border-right-width:3.7px;border-top-width:3.9px"></div>
<div class="c i" style="left:998.8px;top:337.2px;width:262.2px;">Write notes here</div>
<div class="c " style="left:44.0px;top:427.0px;width:129.4px;">Degree of supervision</div>
<div class="c " style="left:181.6px;top:427.0px;width:262.6px;">Supervises contributors on projects. Works with<br>leadership to define and lead projects and<br>programs. Manages backlog for self and team.</div>
<div class="c i" style="left:449.2px;top:427.0px;width:128.6px;">Select</div>
<div class="car" style="left:566.7px;top:431.8px;border-top-color:#5f6368;border-left-width:3.7px;border-right-width:3.7px;border-top-width:3.9px"></div>
<div class="c i" style="left:582.8px;top:427.0px;width:263.2px;">Write examples here</div>
<div class="c i" style="left:865.0px;top:427.0px;width:128.8px;">Select</div>
<div class="car" style="left:982.7px;top:431.8px;border-top-color:#5f6368;border-left-width:3.7px;border-right-width:3.7px;border-top-width:3.9px"></div>
<div class="c i" style="left:998.8px;top:427.0px;width:262.2px;">Write notes here</div>
<div class="c " style="left:44.0px;top:473.8px;width:129.4px;">Impact</div>
<div class="c " style="left:181.6px;top:473.8px;width:262.6px;">Impacts team and department.</div>
<div class="c i" style="left:449.2px;top:473.8px;width:128.6px;">Select</div>
<div class="car" style="left:566.7px;top:478.6px;border-top-color:#5f6368;border-left-width:3.7px;border-right-width:3.7px;border-top-width:3.9px"></div>
<div class="c i" style="left:582.8px;top:473.8px;width:263.2px;">Write examples here</div>
<div class="c i" style="left:865.0px;top:473.8px;width:128.8px;">Select</div>
<div class="car" style="left:982.7px;top:478.6px;border-top-color:#5f6368;border-left-width:3.7px;border-right-width:3.7px;border-top-width:3.9px"></div>
<div class="c i" style="left:998.8px;top:473.8px;width:262.2px;">Write notes here</div>
<div class="c b" style="left:44.0px;top:511.0px;width:129.4px;">Process</div>
<div class="c b i" style="left:449.2px;top:511.0px;width:128.6px;">Select</div>
<div class="car" style="left:566.7px;top:515.8px;border-top-color:#5f6368;border-left-width:3.7px;border-right-width:3.7px;border-top-width:3.9px"></div>
<div class="c i" style="left:582.8px;top:511.0px;width:263.2px;">Write examples here</div>
<div class="c b i" style="left:865.0px;top:511.0px;width:128.8px;">Select</div>
<div class="car" style="left:982.7px;top:515.8px;border-top-color:#5f6368;border-left-width:3.7px;border-right-width:3.7px;border-top-width:3.9px"></div>
<div class="c i" style="left:998.8px;top:511.0px;width:262.2px;">Write notes here</div>
<div class="c " style="left:44.0px;top:529.5px;width:129.4px;">Communication and<br>presentation</div>
<div class="c " style="left:181.6px;top:529.5px;width:262.6px;">Confidently articulates design decisions within the<br>context of business and technical objectives.</div>
<div class="c i" style="left:449.2px;top:529.5px;width:128.6px;">Select</div>
<div class="car" style="left:566.7px;top:534.3px;border-top-color:#5f6368;border-left-width:3.7px;border-right-width:3.7px;border-top-width:3.9px"></div>
<div class="c i" style="left:582.8px;top:529.5px;width:263.2px;">Write examples here</div>
<div class="c i" style="left:865.0px;top:529.5px;width:128.8px;">Select</div>
<div class="car" style="left:982.7px;top:534.3px;border-top-color:#5f6368;border-left-width:3.7px;border-right-width:3.7px;border-top-width:3.9px"></div>
<div class="c i" style="left:998.8px;top:529.5px;width:262.2px;">Write notes here</div>
<div class="abs" style="left:1558.0px;top:0;width:11px;height:600px;background:#f8f9fa;border-left:1px solid #e3e4e5"></div>
<div class="abs" style="left:1557.0px;top:0;width:11.5px;height:21.4px;background:#f8f9fa;border:1px solid #d3d5d8;border-bottom:3px solid #dfe1e4"></div>
<div class="abs" style="left:1559.0px;top:96.0px;width:7.5px;height:35px;border-radius:4px;background:#dadce0"></div>
</div>
</div></div></body></html>
